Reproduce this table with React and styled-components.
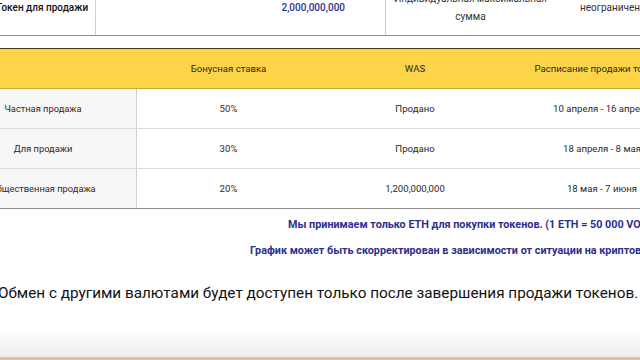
import styled, { createGlobalStyle } from "styled-components";

const GlobalStyle = createGlobalStyle`
  html, body {
    margin: 0;
    padding: 0;
    background: #fff;
    overflow: hidden;
  }
  body {
    font-family: Roboto, "Liberation Sans", sans-serif;
    color: #222;
  }
`;

const Page = styled.div`
  width: 760px;
  height: 360px;
  margin-left: -50px;
  display: flex;
  flex-direction: column;
`;

const InfoTable = styled.div`
  display: grid;
  grid-template-columns: 145px 290px 170px 155px;
  height: 46px;
  margin-top: -11px;
  border-bottom: 1px solid #8d8d8d;
`;

const InfoCell = styled.div`
  display: flex;
  align-items: center;
  justify-content: ${(p) => p.$align || "center"};
  padding: ${(p) => p.$pad || "0"};
  padding-bottom: 8px;
  border-left: ${(p) => (p.$divider ? "1px solid #cfcfcf" : "none")};
  font-size: 10px;
  line-height: 18px;
  text-align: center;
  color: ${(p) => p.$color || "#333"};
  font-weight: ${(p) => p.$weight || 400};
`;

const SaleTable = styled.div`
  margin-top: 12px;
  border-top: 1px solid #4a3d1e;
  border-bottom: 1px solid #8f8f8f;
`;

const columns = "187px 183px 190px 184px";

const HeadRow = styled.div`
  display: grid;
  grid-template-columns: ${columns};
  height: 39px;
  background: #fbd447;
  border-bottom: 1px solid #c9a93a;
`;

const Row = styled.div`
  display: grid;
  grid-template-columns: ${columns};
  height: 39px;
  border-top: ${(p) => (p.$first ? "none" : "1px solid #dcdcdc")};
`;

const Cell = styled.div`
  display: flex;
  align-items: center;
  justify-content: center;
  font-size: ${(p) => (p.$label ? "9.3px" : "9.6px")};
  color: #2a2a2a;
  white-space: nowrap;
  background: ${(p) => (p.$label ? "#f7f7f7" : "transparent")};
  border-right: ${(p) => (p.$label ? "1px solid #d2d2d2" : "none")};
`;

const Notes = styled.div`
  margin-top: 9px;
  display: flex;
  flex-direction: column;
  gap: 12px;
  padding-left: ${(p) => p.$indent}px;
`;

const Note = styled.div`
  font-size: 10.8px;
  font-weight: 700;
  color: #2d2f8e;
  white-space: nowrap;
  padding-left: ${(p) => p.$offset || 0}px;
  line-height: 14px;
`;

const Lead = styled.p`
  margin: 25px 0 0;
  font-size: 15.3px;
  line-height: 20px;
  color: #111;
  white-space: nowrap;
  padding-left: 48px;
`;

const Fade = styled.div`
  margin-top: auto;
  height: 30px;
  background: linear-gradient(#ffffff, #efefef);
  border-bottom: 3px solid #d9c2a6;
`;

const rows = [
  ["Частная продажа", "50%", "Продано", "10 апреля - 16 апреля"],
  ["Для продажи", "30%", "Продано", "18 апреля - 8 мая"],
  ["Общественная продажа", "20%", "1,200,000,000", "18 мая - 7 июня"],
];

export default function App() {
  return (
    <>
      <GlobalStyle />
      <Page>
        <InfoTable>
          <InfoCell $align="flex-start" $pad="0 0 0 46px" $weight={500} $color="#111">
            Токен для продажи
          </InfoCell>
          <InfoCell $divider $align="flex-end" $pad="0 40px 0 0" $weight={500} $color="#2d2f8e">
            2,000,000,000
          </InfoCell>
          <InfoCell $divider>
            Индивидуальная максимальная
            <br />
            сумма
          </InfoCell>
          <InfoCell $align="flex-start" $pad="0 0 0 25px">
            неограниченно
          </InfoCell>
        </InfoTable>

        <SaleTable>
          <HeadRow>
            <Cell />
            <Cell>Бонусная ставка</Cell>
            <Cell>WAS</Cell>
            <Cell>Расписание продажи токенов</Cell>
          </HeadRow>
          {rows.map((r, i) => (
            <Row key={r[0]} $first={i === 0}>
              <Cell $label>{r[0]}</Cell>
              <Cell>{r[1]}</Cell>
              <Cell>{r[2]}</Cell>
              <Cell>{r[3]}</Cell>
            </Row>
          ))}
        </SaleTable>

        <Notes $indent={300}>
          <Note $offset={38}>Мы принимаем только ETH для покупки токенов. (1 ETH = 50 000 VOCO)</Note>
          <Note>График может быть скорректирован в зависимости от ситуации на криптовалютном рынке.</Note>
        </Notes>

        <Lead>Обмен с другими валютами будет доступен только после завершения продажи токенов.</Lead>

        <Fade />
      </Page>
    </>
  );
}
